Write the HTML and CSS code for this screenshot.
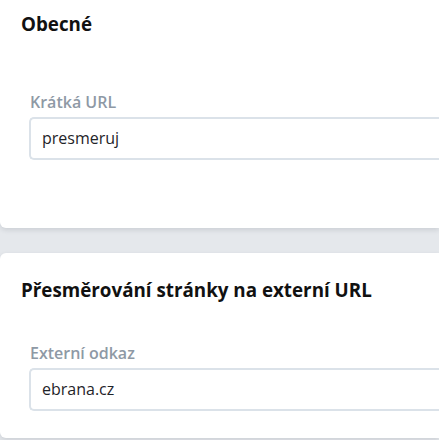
FILE: index.html
```html
<!DOCTYPE html>
<html lang="cs">
<head>
<meta charset="utf-8">
<link rel="stylesheet" href="styles.css">
</head>
<body>
<div class="page">
  <section class="card card-general">
    <h2 class="card-title">Obecné</h2>
    <div class="field field-first">
      <label class="field-label">Krátká URL</label>
      <div class="field-input">presmeruj</div>
    </div>
  </section>
  <section class="card card-redirect">
    <h2 class="card-title">Přesměrování stránky na externí URL</h2>
    <div class="field field-second">
      <label class="field-label">Externí odkaz</label>
      <div class="field-input">ebrana.cz</div>
    </div>
  </section>
</div>
</body>
</html>
```
FILE: styles.css
```css
html, body {
  margin: 0;
  padding: 0;
  background: #e5e8ec;
  overflow: hidden;
  height: 440px;
}
body {
  font-family: "Open Sans", "Noto Sans", sans-serif;
  color: #1d2125;
}
.page {
  display: flex;
  flex-direction: column;
  gap: 25px;
}
.card {
  background: #ffffff;
  border-radius: 6px 0 0 6px;
  box-shadow: 0 2px 5px rgba(30, 40, 55, 0.13);
  padding-left: 21px;
}
.card-general {
  margin-top: -12px;
  padding-top: 24px;
  padding-bottom: 68px;
}
.card-redirect {
  padding-top: 25px;
  padding-bottom: 27px;
}
.card-title {
  margin: 0;
  font-size: 18.8px;
  line-height: 24px;
  font-weight: 700;
  color: #111;
}
.field {
  padding-left: 8px;
}
.field-first { margin-top: 56px; }
.field-second { margin-top: 41px; }
.field-label {
  display: block;
  font-size: 16px;
  line-height: 20px;
  font-weight: 600;
  color: #8e99a5;
  padding-left: 1px;
  margin-bottom: 5px;
}
.field-input {
  height: 39px;
  border: 2px solid #dbe2e9;
  border-right: none;
  border-radius: 5px 0 0 5px;
  padding: 0 11px;
  font-size: 16px;
  line-height: 39px;
  color: #1f2429;
}
```
